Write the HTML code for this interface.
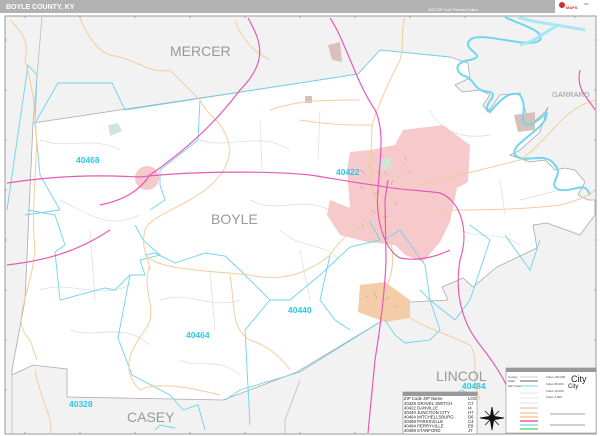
<!DOCTYPE html>
<html><head><meta charset="utf-8"><style>
html,body{margin:0;padding:0;background:#fff;width:600px;height:436px;overflow:hidden;font-family:"Liberation Sans",sans-serif}
</style></head><body>
<svg width="600" height="436" viewBox="0 0 600 436" xmlns="http://www.w3.org/2000/svg" font-family="Liberation Sans, sans-serif">
<rect x="0" y="0" width="600" height="13" fill="#b2b2b2"/>
<text x="6" y="9" font-size="7" font-weight="bold" fill="#fff">BOYLE COUNTY, KY</text>
<text x="428" y="11" font-size="3.5" fill="#fff">2020 ZIP Code Premium Edition</text>
<rect x="555" y="0" width="45" height="13" fill="#fff"/>
<circle cx="562" cy="5" r="3" fill="#c33"/>
<text x="566" y="9" font-size="4" fill="#c33" font-weight="bold">MAPS</text>
<text x="584" y="5" font-size="3" fill="#666">ZIP</text>
<rect x="5" y="16" width="591" height="418" fill="#f2f2f2" stroke="#999" stroke-width="1"/>
<g stroke="#777" stroke-width="0.6">
<path d="M25,16 v2 M80,16 v2 M135,16 v2 M190,16 v2 M245,16 v2 M300,16 v2 M355,16 v2 M410,16 v2 M465,16 v2 M520,16 v2 M575,16 v2 M25,434 v-2 M80,434 v-2 M135,434 v-2 M190,434 v-2 M245,434 v-2 M300,434 v-2 M355,434 v-2 M410,434 v-2 M465,434 v-2 M5,40 h2 M5,90 h2 M5,140 h2 M5,190 h2 M5,240 h2 M5,290 h2 M5,340 h2 M5,390 h2 M596,40 h-2 M596,90 h-2 M596,140 h-2 M596,190 h-2 M596,240 h-2 M596,290 h-2 M596,340 h-2"/>
</g>
<!-- county -->
<polygon fill="#fff" stroke="#aaa" stroke-width="0.8" points="33,123 300,83 358,74 380,50 450,57 468,63 470,78 455,85 462,92 480,90 490,95 483,105 488,112 500,95 520,93 525,110 530,125 545,112 548,107 540,132 520,150 510,155 530,162 545,160 555,170 565,168 575,170 585,182 578,195 588,200 595,200 595,215 580,235 547,223 533,225 537,248 497,267 473,287 463,278 442,287 448,300 410,302 380,322 297,372 223,400 67,397 67,369 33,365 12,375 12,370 25,300"/>
<!-- faint gray roads -->
<g fill="none" stroke="#dcdcdc" stroke-width="0.7">
<path d="M40,140 C70,150 90,135 120,150 M60,200 C90,215 110,230 140,215 M40,290 C70,280 100,300 130,285 M160,300 C190,290 210,310 240,300 M250,200 C280,215 300,195 330,210 M200,140 C230,150 260,130 290,150 M280,230 C300,250 320,240 340,260 M460,230 C480,240 500,230 520,245 M430,110 C440,130 460,140 490,135 M70,330 C100,340 120,320 150,345 M180,360 C200,370 215,355 240,375 M260,120 L262,170 M320,110 L318,160 M90,230 L95,300 M210,270 L215,330 M300,250 L310,300 M500,180 L505,215 M520,200 L560,190"/>
</g>
<!-- cities -->
<path fill="#f6c9cb" d="M403,130 L443,125 L470,145 L468,182 L457,188 L450,222 L440,242 L423,262 L405,255 L395,245 L367,242 L340,235 L327,215 L330,200 L350,208 L347,170 L350,152 L370,150 L395,145Z"/>
<path fill="#f4cca8" d="M360,285 L385,282 L410,300 L410,318 L385,322 L358,312Z"/>
<circle cx="147" cy="178" r="12" fill="#f6c9cb"/>
<path fill="#d9c1bb" d="M328,45 L340,42 L342,62 L332,60Z M514,115 L535,112 L535,130 L518,132Z M305,96 L312,96 L312,103 L305,103Z"/>
<path fill="#cfe6d8" d="M108,125 L118,123 L122,131 L110,136Z M378,160 L390,157 L392,168 L380,170Z"/>
<g fill="none" stroke="#999" stroke-width="0.5">
<path d="M360,170 l5,3 m3,-8 l4,4 m5,2 l3,5 m-20,10 l4,3 m10,5 l5,-2 m5,-20 l4,3 m5,5 l-2,5 m-20,25 l4,3 m8,5 l5,-2 m6,-15 l3,4 m10,-35 l4,3 m-50,50 l3,4 m40,-70 l3,4"/>
<path d="M365,295 l4,3 m5,-5 l3,5 m8,2 l4,-3 m5,8 l3,3"/>
</g>
<!-- river -->
<path d="M505,17 C520,25 545,30 540,40 C530,50 480,30 470,40 C460,50 490,55 470,60 C455,62 455,70 462,75 C478,80 470,90 490,92 C500,96 480,105 490,112 C500,100 510,90 520,95 C530,110 515,125 530,125 C545,118 550,105 545,120 C535,135 510,145 515,155 C525,165 545,150 555,165 C565,175 545,185 560,190 C575,192 585,180 590,195" fill="none" stroke="#6fd6ef" stroke-width="2"/>
<path d="M518,17 C530,22 560,25 585,30 M520,45 C540,40 545,30 560,25" fill="none" stroke="#a8e6f5" stroke-width="3"/>
<!-- zip lines -->
<g fill="none" stroke="#6dd3ee" stroke-width="0.9">
<path d="M7,210 L28,65 L37,75 L35,123 L58,83 L112,83 L125,110 L300,83"/>
<path d="M300,83 L358,74 L380,50 L450,57"/>
<path d="M35,123 L40,175 L60,210 L25,215"/>
<path d="M200,100 L198,140 L160,170 L160,185 L165,200 L150,210"/>
<path d="M28,210 L55,215 L65,245 L55,252 L60,300 L105,288 L115,290 L130,275 L145,275 L140,260 L160,255 L143,240 L135,225"/>
<path d="M130,275 L118,338 L132,375 L170,395 L183,410 L198,405 L205,430 M155,430 L160,425 L175,428"/>
<path d="M145,255 L155,253 L175,263 L205,253 L225,256 L240,270 L270,300 L245,330 L250,425"/>
<path d="M270,300 L290,300 L320,275 L350,247 L380,240 L370,222 M384,240 L400,230 L425,265 L430,300"/>
<path d="M380,322 L300,372 L240,390 L225,400"/>
<path d="M470,225 L490,240 L470,300 L455,320 L430,300 L420,290 M505,235 L530,270 L540,240"/>
<path d="M385,320 L395,335 L405,343 L430,340 L440,330 L430,300 M445,400 L462,390 L470,395 M420,420 L430,410"/>
<path d="M330,255 L320,300 L335,320 L350,330"/>
</g>
<!-- orange roads -->
<g fill="none" stroke="#f5cc9c" stroke-width="1">
<path d="M10,20 C20,30 30,40 25,60 C30,80 35,100 35,120 C40,150 30,200 35,250 C30,300 10,320 30,340 L37,360 M35,370 C40,400 55,420 50,434"/>
<path d="M80,18 C85,30 95,50 110,55 C140,60 150,75 170,70 C180,80 190,90 200,100 C210,120 225,120 230,150 C225,200 150,210 145,230 C140,250 150,260 150,270"/>
<path d="M145,255 C160,270 200,270 250,275 C270,280 300,280 330,255 C340,240 350,230 370,225"/>
<path d="M150,265 C140,290 160,310 145,330 C130,350 120,370 140,390 C160,380 200,390 220,395"/>
<path d="M230,275 C235,300 230,330 250,340 C265,345 280,355 290,370"/>
<path d="M270,110 C300,100 320,100 360,100 M300,120 C330,125 350,125 372,125 C372,160 365,185 380,210 C390,235 400,260 385,290"/>
<path d="M372,125 C380,100 390,80 400,60 C405,40 400,30 405,18"/>
<path d="M420,185 C440,180 480,170 520,160 C550,140 560,110 595,100"/>
<path d="M440,210 C480,210 520,210 560,205 C580,200 590,195 595,190"/>
<path d="M410,318 C430,330 450,335 470,345 C480,360 470,375 480,400"/>
<path d="M235,20 C240,35 250,50 270,60"/>
</g>
<!-- gray roads -->
<g fill="none" stroke="#bbb" stroke-width="0.8">
<path d="M42,17 L33,123 M12,375 L12,433"/>
<path d="M67,369 L67,397 M300,380 L285,420 L285,433"/>
</g>
<!-- pink highways -->
<g fill="none" stroke="#e85ab6" stroke-width="1.2">
<path d="M7,183 C60,175 100,175 140,177 C180,172 260,170 310,175 C330,178 350,182 380,186 C400,190 420,190 440,193 C460,200 470,230 460,260 C455,290 460,320 480,345 C500,370 510,390 512,400"/>
<path d="M248,18 C260,40 270,60 240,90 C225,110 200,140 150,175 C140,190 125,200 100,205"/>
<path d="M330,18 C345,40 355,80 375,110 C385,130 380,160 378,190 C375,220 385,250 400,258 C420,262 440,255 450,250"/>
<path d="M388,180 L385,200 L386,260 C385,290 380,330 375,360 L368,433"/>
<path d="M110,230 C80,250 50,260 7,265"/>
<path d="M580,70 C575,90 590,100 595,110"/>
</g>
<!-- labels -->
<g fill="#999" font-size="14">
<text x="170" y="56">MERCER</text>
<text x="211" y="224">BOYLE</text>
<text x="436" y="381">LINCOL</text>
<text x="127" y="422">CASEY</text>
</g>
<text x="552" y="97" font-size="7.5" fill="#999">GARRARD</text>
<g fill="#30c6ea" font-size="8.5" font-weight="bold">
<text x="76" y="163">40468</text>
<text x="336" y="175">40422</text>
<text x="186" y="338">40464</text>
<text x="288" y="313">40440</text>
<text x="462" y="389">40484</text>
<text x="69" y="407">40328</text>
</g>
<!-- ZIP table -->
<rect x="403" y="392" width="74" height="42" fill="#fff" stroke="#777" stroke-width="0.5"/>
<rect x="403" y="392" width="74" height="4" fill="#999"/>
<g font-size="4.3" fill="#222">
<text x="404" y="400">ZIP Code  ZIP Name</text><text x="468" y="400">LOC</text>
<text x="404" y="405">40328  GRAVEL SWITCH</text><text x="468" y="405">C7</text>
<text x="404" y="409.5">40422  DANVILLE</text><text x="468" y="409.5">I4</text>
<text x="404" y="414">40440  JUNCTION CITY</text><text x="468" y="414">H7</text>
<text x="404" y="418.5">40464  MITCHELLSBURG</text><text x="468" y="418.5">D6</text>
<text x="404" y="423">40468  PARKSVILLE</text><text x="468" y="423">C4</text>
<text x="404" y="427.5">40484  PERRYVILLE</text><text x="468" y="427.5">E8</text>
<text x="404" y="432">40489  STANFORD</text><text x="468" y="432">J7</text>
</g>
<!-- compass -->
<g stroke="#111" stroke-width="0.8" fill="#111">
<path d="M492,407 L494,418 L492,430 L490,418Z M480,418 L492,416 L504,418 L492,420Z" />
<path d="M485,411 L499,425 M499,411 L485,425" fill="none"/>
</g>
<!-- legend -->
<rect x="506" y="368" width="90" height="65" fill="#fff" stroke="#777" stroke-width="0.5"/>
<rect x="506" y="368" width="90" height="4" fill="#999"/>
<g stroke-width="1.5" fill="none">
<path d="M520,377 L538,377" stroke="#ddd"/>
<path d="M520,381 L538,381" stroke="#999"/>
<path d="M520,386 L538,386" stroke="#a6e4f5"/>
<path d="M520,393 L538,393" stroke="#eee"/>
<path d="M520,398 L538,398" stroke="#eee"/>
<path d="M520,403 L538,403" stroke="#eee"/>
<path d="M520,408 L538,408" stroke="#f4c6c6"/>
<path d="M520,413 L538,413" stroke="#f5cc9c"/>
<path d="M520,417 L538,417" stroke="#f5cc9c"/>
<path d="M520,421 L538,421" stroke="#e85ab6"/>
<path d="M520,425 L538,425" stroke="#8ad9f0"/>
<path d="M520,429 L538,429" stroke="#6ddc6d"/>
<path d="M550,414 L585,414 M550,425 L585,425" stroke="#444" stroke-width="0.5"/>
</g>
<g font-size="3" fill="#444">
<text x="508" y="378">County</text><text x="508" y="382">State</text><text x="508" y="387">ZIP Code</text>
<text x="546" y="378">Cities 100,000</text><text x="546" y="385">Cities 25,000</text><text x="546" y="392">Cities 10,000</text><text x="546" y="398">Cities 1,000</text>
</g>
<text x="571" y="382" font-size="9" fill="#222">City</text>
<text x="568" y="388" font-size="6" fill="#222">City</text>
</svg>
</body></html>
